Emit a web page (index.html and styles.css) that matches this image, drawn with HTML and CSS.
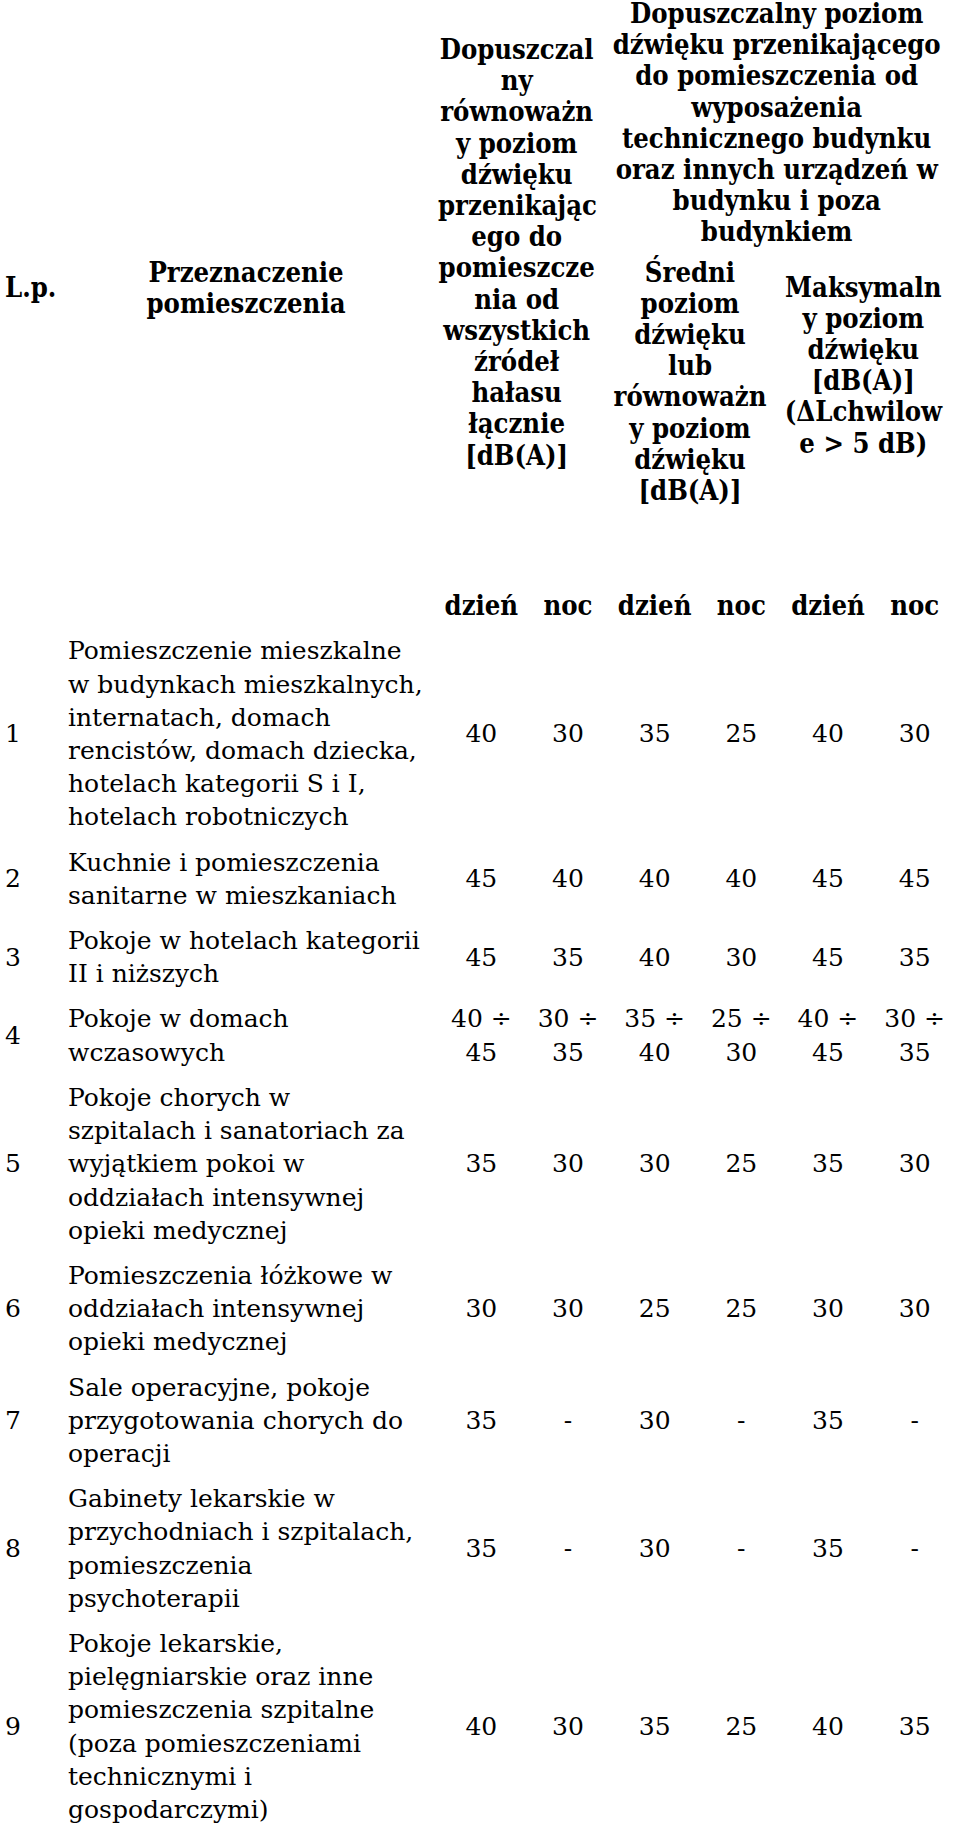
FILE: index.html
```html
<!DOCTYPE html>
<html lang="pl">
<head>
<meta charset="utf-8">
<title>Dopuszczalne poziomy dźwięku</title>
<link rel="stylesheet" href="styles.css">
</head>
<body>
<table class="noise">
  <colgroup>
    <col class="c-lp">
    <col class="c-desc">
    <col class="c-val"><col class="c-val"><col class="c-val"><col class="c-val"><col class="c-val"><col class="c-val">
  </colgroup>
  <thead>
    <tr class="hrow-a">
      <th class="blank"></th>
      <th class="blank"></th>
      <th class="grp grp-total" colspan="2" rowspan="2">Dopuszczal<br>ny<br>równoważn<br>y poziom<br>dźwięku<br>przenikając<br>ego do<br>pomieszcze<br>nia od<br>wszystkich<br>źródeł<br>hałasu<br>łącznie<br>[dB(A)]</th>
      <th class="grp grp-tech" colspan="4">Dopuszczalny poziom<br>dźwięku przenikającego<br>do pomieszczenia od<br>wyposażenia<br>technicznego budynku<br>oraz innych urządzeń w<br>budynku i poza<br>budynkiem</th>
    </tr>
    <tr class="hrow-b">
      <th class="lp-head">L.p.</th>
      <th class="desc-head">Przeznaczenie<br>pomieszczenia</th>
      <th class="grp grp-avg" colspan="2">Średni<br>poziom<br>dźwięku<br>lub<br>równoważn<br>y poziom<br>dźwięku<br>[dB(A)]</th>
      <th class="grp grp-max" colspan="2">Maksymaln<br>y poziom<br>dźwięku<br>[dB(A)]<br>(ΔLchwilow<br>e &gt; 5 dB)</th>
    </tr>
    <tr class="hrow-c">
      <th class="blank"></th>
      <th class="blank"></th>
      <th class="tod">dzień</th><th class="tod">noc</th>
      <th class="tod">dzień</th><th class="tod">noc</th>
      <th class="tod">dzień</th><th class="tod">noc</th>
    </tr>
  </thead>
  <tbody>
    <tr>
      <td class="lp">1</td>
      <td class="desc">Pomieszczenie mieszkalne<br>w budynkach mieszkalnych,<br>internatach, domach<br>rencistów, domach dziecka,<br>hotelach kategorii S i I,<br>hotelach robotniczych</td>
      <td class="val">40</td><td class="val">30</td><td class="val">35</td><td class="val">25</td><td class="val">40</td><td class="val">30</td>
    </tr>
    <tr>
      <td class="lp">2</td>
      <td class="desc">Kuchnie i pomieszczenia<br>sanitarne w mieszkaniach</td>
      <td class="val">45</td><td class="val">40</td><td class="val">40</td><td class="val">40</td><td class="val">45</td><td class="val">45</td>
    </tr>
    <tr>
      <td class="lp">3</td>
      <td class="desc">Pokoje w hotelach kategorii<br>II i niższych</td>
      <td class="val">45</td><td class="val">35</td><td class="val">40</td><td class="val">30</td><td class="val">45</td><td class="val">35</td>
    </tr>
    <tr>
      <td class="lp">4</td>
      <td class="desc">Pokoje w domach<br>wczasowych</td>
      <td class="val">40 ÷<br>45</td><td class="val">30 ÷<br>35</td><td class="val">35 ÷<br>40</td><td class="val">25 ÷<br>30</td><td class="val">40 ÷<br>45</td><td class="val">30 ÷<br>35</td>
    </tr>
    <tr>
      <td class="lp">5</td>
      <td class="desc">Pokoje chorych w<br>szpitalach i sanatoriach za<br>wyjątkiem pokoi w<br>oddziałach intensywnej<br>opieki medycznej</td>
      <td class="val">35</td><td class="val">30</td><td class="val">30</td><td class="val">25</td><td class="val">35</td><td class="val">30</td>
    </tr>
    <tr>
      <td class="lp">6</td>
      <td class="desc">Pomieszczenia łóżkowe w<br>oddziałach intensywnej<br>opieki medycznej</td>
      <td class="val">30</td><td class="val">30</td><td class="val">25</td><td class="val">25</td><td class="val">30</td><td class="val">30</td>
    </tr>
    <tr>
      <td class="lp">7</td>
      <td class="desc">Sale operacyjne, pokoje<br>przygotowania chorych do<br>operacji</td>
      <td class="val">35</td><td class="val">-</td><td class="val">30</td><td class="val">-</td><td class="val">35</td><td class="val">-</td>
    </tr>
    <tr>
      <td class="lp">8</td>
      <td class="desc">Gabinety lekarskie w<br>przychodniach i szpitalach,<br>pomieszczenia<br>psychoterapii</td>
      <td class="val">35</td><td class="val">-</td><td class="val">30</td><td class="val">-</td><td class="val">35</td><td class="val">-</td>
    </tr>
    <tr>
      <td class="lp">9</td>
      <td class="desc">Pokoje lekarskie,<br>pielęgniarskie oraz inne<br>pomieszczenia szpitalne<br>(poza pomieszczeniami<br>technicznymi i<br>gospodarczymi)</td>
      <td class="val">40</td><td class="val">30</td><td class="val">35</td><td class="val">25</td><td class="val">40</td><td class="val">35</td>
    </tr>
  </tbody>
</table>
</body>
</html>
```

FILE: styles.css
```css
html, body {
  margin: 0;
  padding: 0;
  background: #ffffff;
  color: #000000;
}

body {
  font-family: "DejaVu Serif", "Liberation Serif", serif;
}

.noise {
  width: 958px;
  table-layout: fixed;
  border-collapse: collapse;
  border-spacing: 0;
  margin-top: -2px;
}

.c-lp { width: 62px; }
.c-desc { width: 376px; }
.c-val { width: 86.66px; }

.noise th {
  font-family: "DejaVu Serif Condensed", "DejaVu Serif", serif;
  font-stretch: condensed;
  font-weight: bold;
  font-size: 27.2px;
  line-height: 31.2px;
  text-align: center;
  vertical-align: top;
  padding: 0;
  white-space: nowrap;
}

.noise th.grp {
  padding-right: 16px;
}

.hrow-a th.grp-tech {
  padding-bottom: 9px;
}

.hrow-a th.grp-total {
  padding-top: 36px;
}

.hrow-b th.lp-head {
  text-align: left;
  padding-left: 5px;
  padding-top: 15px;
}

.hrow-b th.desc-head {
  padding-right: 8px;
}

.hrow-b th.grp-max {
  padding-top: 15px;
}

.hrow-c th {
  padding-top: 84px;
  padding-bottom: 7px;
}

.noise td {
  font-size: 25px;
  line-height: 33.2px;
  vertical-align: middle;
  padding: 6px 0;
  white-space: nowrap;
}

.noise td.lp {
  padding-left: 5px;
  text-align: left;
}

.noise td.desc {
  padding-left: 6px;
  text-align: left;
}

.noise td.val {
  text-align: center;
}
```
